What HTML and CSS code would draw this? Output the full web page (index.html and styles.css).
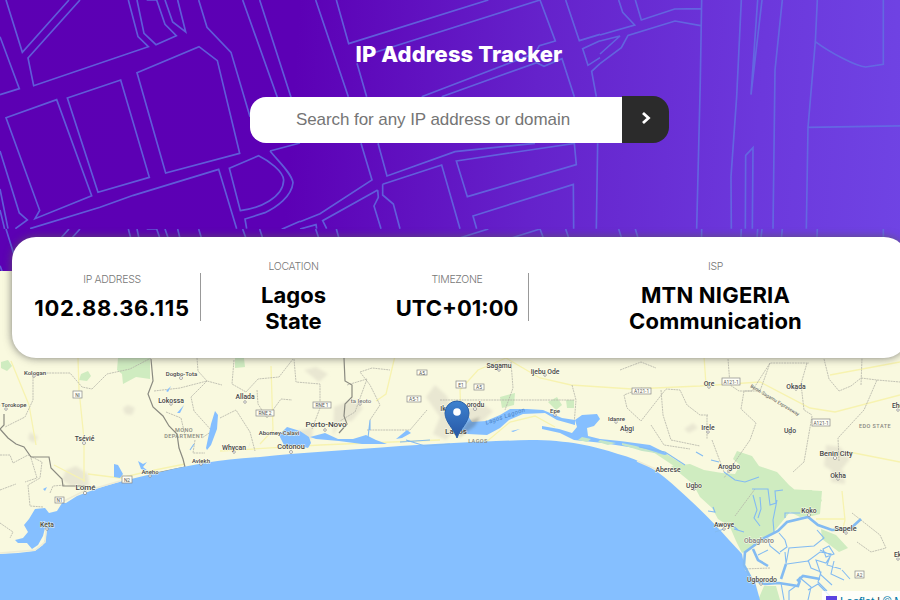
FILE: index.html
```
<!DOCTYPE html>
<html lang="en">
<head>
<meta charset="utf-8">
<title>IP Address Tracker</title>
<link rel="stylesheet" href="styles.css">
</head>
<body>
<div class="page">
<header class="hero">
  <svg class="streets" viewBox="0 0 918 271" aria-hidden="true">
    <defs>
      <clipPath id="tile"><rect width="918" height="229"/></clipPath>
      <g id="pattern" clip-path="url(#tile)">
        <g transform="scale(.33333)">
          <path d="M18 0 67 157 207 0M240 0 84 174 101 257 445 140 414 110 385 0M411 0 432 100 468 134 529 107 495 73 470 0M440 0H472M495 0 518 66 557 96 533 0M0 110 58 266 0 284M596 0 621 82 693 157 750 350M728 0 832 292M779 0 873 292"/>
          <path d="M18 353 170 299 275 587 105 656 119 631ZM202 294 362 240 448 532 294 577ZM411 218 597 140 652 182 719 460 497 519ZM90 686 300 622 400 586 656 508 710 686M688 505 776 467C805 481 850 515 851 540C850 592 780 625 721 632ZM810 453 900 429M810 453C836 485 875 520 879 548C875 590 829 622 795 638L735 657 740 686M0 453 58 639 82 660 46 686M0 567 24 686M0 630 20 712M845 688 900 664"/>
        </g>
        <g transform="translate(300) scale(.33333)">
          <path d="M47 0 145 290M109 0 146 131 565 0M720 0 210 162M720 0 766 123 718 137 705 160 365 290M425 290 710 188 732 199 786 176 823 290M171 190 200 290M797 0 838 122 900 103M900 122 848 146 864 196 900 173M900 191 875 214 889 290M183 430 216 540 60 641 0 665M234 430 261 528 465 455 705 430M248 553 425 495 480 686M248 553V585L280 612 300 686M233 570 68 662 80 686M233 570 235 592 222 618 243 686M469 483 823 430 829 494 502 590ZM530 686 519 648 820 553 821 686M893 430 889 686M0 687 48 674 50 686"/>
        </g>
        <g transform="translate(600) scale(.33333)">
          <path d="M56 0 68 37 104 75 0 105M106 0 124 60 224 27 305 26M0 123 60 108 0 162M0 191 64 143 84 106 225 63 302 77M305 0 301 240 290 686M424 0 410 290 393 530 394 686M473 0 453 284 486 0M547 0 525 210 519 686M652 0 646 125 624 382 619 686M646 125C690 158 770 200 797 201L850 193V0M624 382 954 377M436 686 437 466 459 443 457 686"/>
        </g>
      </g>
    </defs>
    <use href="#pattern"/>
    <use href="#pattern" y="229"/>
  </svg>
  <div class="intro">
    <h1>IP Address Tracker</h1>
    <form class="search">
      <input type="text" placeholder="Search for any IP address or domain" aria-label="IP address or domain">
      <button type="button" aria-label="Search"><svg width="11" height="14" viewBox="0 0 11 14"><path d="M2 2 7.500 7 2 12"/></svg></button>
    </form>
  </div>
</header>

<section class="card">
  <div class="item ruled"><h2>IP ADDRESS</h2><p class="ip">102.88.36.115</p></div>
  <div class="item"><h2>LOCATION</h2><p>Lagos<br>State</p></div>
  <div class="item ruled"><h2>TIMEZONE</h2><p class="zone">UTC+01:00</p></div>
  <div class="item"><h2>ISP</h2><p class="isp">MTN NIGERIA<br>Communication</p></div>
</section>

<main class="map">
<svg class="tiles" viewBox="0 271 918 329">
  <defs>
    <linearGradient id="pin" x2="0" y2="1"><stop stop-color="#3d82cf"/><stop offset="1" stop-color="#2857a5"/></linearGradient>
    <filter id="soft"><feGaussianBlur stdDeviation="1.500"/></filter>
  </defs>
  <rect class="land" y="271" width="918" height="329"/>

  <g class="green">
    <path d="M118 358h32v21l-14-2-13 7-1-10-5-4zM81 374l7-3 3 5-4 5-8-1zM1 362l7-2 4 6-5 5-6-3zM235 358h9l1 9-10 1z"/>
    <path d="M671 466 690 464 704 470 722 473 735 474 740 465 733 459 737 451 752 456 759 466 777 472 789 485 795 490 812 490 822 500 816 514 800 517 790 512 772 534 757 544 742 553 736 541 730 527 718 519 712 508 700 497 693 484zM640 445 660 450 684 465 680 470 656 454zM788 489 822 491 820 514 812 516 790 512zM821 529 836 535 848 548 839 552 822 539zM764 586 776 586 780 600 758 600zM500 397l15-4-1 12-12 3zM548 402l9-5 5 8-6 5zM566 400l8 0 0 8-7 0z"/>
  </g>
  <g class="urban" filter="url(#soft)">
    <path d="M66 470 76 466 88 474 89 486 71 486 62 480zM435 385 447 396 453 415 465 409 482 404 493 411 481 423 455 430 446 440 433 434 440 417 426 397zM826 445 840 447 850 459 838 474 824 466zM30 432l8 5-4 6-6-4zM123 408l5-3 7 3-3 7-7-1zM304 370l12-3 12 7-9 8zM334 407l20-8 9 9-11 13-12 1-7 14zM289 433l24-6-1 12-20 4zM684 429l9-6 5 5-9 5zM832 468l12 3 1 13-14-2z"/>
  </g>
  <g class="motor">
    <path d="M11 361 29 405 36 445M78 358 79 390 84 439 84 482M54 465 85 481M220 451 320 445 440 440M271 366 273 430 260 444M395 356 386 394 376 401M461 415 460 390 478 370 506 358M506 358 540 378 571 385 632 389 700 386 760 382 810 408 835 412 900 395M704 356 706 385M485 443 510 422 535 416 555 427M830 375 900 362M842 491 845 520 842 532M816 519 845 519M849 452 900 462M88 474 120 478 150 471 185 464"/>
  </g>
  <g class="minor">
    <path d="M25 373H70L82 387 92 389 107 374 130 369 151 358M33 374 33 400 25 417 5 427M0 455 10 455 13 463 28 455 42 462 40 478 28 485 30 506 43 507M31 458 37 478 25 482M0 490 16 484M0 523 13 532 10 538M50 493 53 486 65 485M154 391 180 388 207 381 191 397 194 411 212 431 202 438M166 412 181 418 186 439M195 440 193 453 205 453M197 358 198 371 207 381 222 385"/>
    <path d="M234 360 232 384 246 392 258 379 279 377 293 359M294 359 296 382 320 384 320 408 312 429M257 390 258 404 267 418 281 399 292 400M220 418 236 410 250 432 255 451M347 385 367 379 355 412 340 421M370 420 380 405 370 385 360 372 372 368 390 370M367 430H410L427 410M440 400H575M511 362 513 388 505 410M572 385 576 400 574 425M620 370 641 362 656 368M642 388 624 395 627 408 641 421 666 389 680 390 687 405 700 415 708 415M707 415V439M728 359 730 385 739 391 752 391 770 363H809M770 363 760 391 744 391 741 409 756 423 750 440 741 453 724 478M807 363 801 384 804 410 812 415M824 359 829 379 839 391 851 386 861 378 877 380 900 382M877 380 864 410 838 438 839 461M812 416 808 439 804 462 793 472M861 385 862 358M852 513 880 535 886 548 871 552 857 542M712 440 724 472M755 489 735 516M651 425 664 445 690 449M770 568 743 569M661 390 663 415 671 440 700 446"/>
  </g>
  <g class="border">
    <path d="M4 414V425L0 429 8 438 16 444 24 447 31 457H49L51 468 62 479 63 486H85V495M151 359 153 381 148 394 153 407 163 416 169 426 177 434 179 448 183 459 185 467 156 473M344 358 345 381 352 385 352 397 345 404 344 416 347 424 339 433"/>
  </g>

  <path class="water" d="M0 554 18 553 35 551 43 545 46 537 47 529 45 528 43 536 38 545 32 549 27 543 18 543 15 540 23 538 28 532 24 525 29 519 35 509 45 508 49 513 57 511 62 503 66 503 77 496 85 493C110 483 140 477 165 471C190 465 222 459 260 457C305 452 350 450 400 446C440 444 488 441 530 440C568 440 594 446 618 454C642 460 659 471 679 490C696 505 715 524 729 540L742 554 745 570 755 582 760 600H0z"/>
  <path class="water" d="M206 448 211 424 215 411 218 415 217 429 211 445 207 450zM166 391l5-5-3 6zM177 413l7-8-4 8zM114 477V464L118 465 123 474 120 478zM138 461 143 464 147 462 143 467 148 471 141 469zM43 489l4-2-2 4zM279 435 287 427 300 431 309 437 311 443 308 448 297 445 285 447zM310 437 325 433 338 439 353 439 366 435 376 440 387 444 362 444 339 441 316 439zM396 439 407 430 411 433 402 438zM249 446 251 439 248 449z"/>
  <path class="water" d="M458 421 466 413 472 422 486 421 500 415 510 409 527 409 543 410 562 418 575 420 575 425 557 420 545 413 523 414 509 420 500 428 487 435 468 434 460 432zM542 426 559 429 572 433 577 427 575 420 582 415 597 414 600 419 594 426 587 428 588 436 600 439 620 441 635 443 650 445 668 454 665 455 635 448 603 443 574 440 560 433 542 429zM511 431l9-2-7 3z"/>
  <path class="delta" d="M582 437l9 2-4 3-9-2zM600 440l16 3-8 2-10-3zM622 443l14 3 26 8-20-3-20-6z"/>
  <g class="river">
    <path d="M368 438 370 420 370 430M406 440 425 446 450 444M400 442 430 440M194 444 190 450M639 447 665 452 685 465M696 452 703 456M711 460 719 462M724 472 735 480 745 482 759 477M752 489 768 489 770 505 776 503 775 491 783 490M777 500 773 520 774 532M753 495 757 510 754 518 760 526M760 497 761 509 758 518M713 507 715 512 708 511M734 529 744 532M731 524 738 530M785 518V513H800M715 532 724 529M768 538 770 546 780 554M779 533 785 540 787 547 780 552M768 550 758 555"/>
    <path class="wide" d="M744 553 764 538 778 531 787 522 808 517 818 525 832 530 850 529 861 519M745 552 744 565 752 580 765 584 779 583 798 586 800 580M786 564 781 579M797 581 803 576 820 579M753 549 758 560 768 566"/>
    <path d="M786 564 789 548 814 546 824 538 817 530M787 564 808 561 820 552 831 554 827 565 841 569M781 583 784 600M796 586 789 591 789 600M799 577 811 587 808 600M820 550 831 555 826 563 816 560 821 575 832 585M808 560 811 568 821 572 818 582 827 591M834 561 831 574 844 580M842 570 850 579M808 590 818 584 830 596M785 552 786 563M823 549 829 546 834 554 826 557z"/>
  </g>
  <path class="sand" d="M46 530 45 542 35 550 0 553M62 502 82 492 120 481M637 461 660 471"/>

  <g class="dots">
    <circle cx="34" cy="376" r="1.300"/><circle cx="6" cy="409" r="1.300"/><circle cx="84" cy="443" r="1.500"/><circle cx="85" cy="493" r="1.600"/><circle cx="47" cy="529" r="1.300"/><circle cx="181" cy="378" r="1.500"/><circle cx="171" cy="404" r="1.300"/><circle cx="201" cy="464" r="1.400"/><circle cx="150" cy="476" r="1.300"/><circle cx="245" cy="402" r="1.300"/><circle cx="234" cy="452" r="1.300"/><circle cx="291" cy="452" r="1.500"/><circle cx="325" cy="430" r="1.300"/><circle cx="360" cy="404" r="1.300"/><circle cx="499" cy="370" r="1.300"/><circle cx="545" cy="375" r="1.300"/><circle cx="475" cy="409" r="1.500"/><circle cx="555" cy="415" r="1.300"/><circle cx="616" cy="422" r="1.300"/><circle cx="627" cy="431" r="1.300"/><circle cx="709" cy="387" r="1.300"/><circle cx="708" cy="432" r="1.300"/><circle cx="796" cy="389" r="1.300"/><circle cx="790" cy="433" r="1.300"/><circle cx="835" cy="458" r="1.600"/><circle cx="838" cy="479" r="1.300"/><circle cx="729" cy="471" r="1.300"/><circle cx="694" cy="489" r="1.300"/><circle cx="724" cy="529" r="1.300"/><circle cx="809" cy="515" r="1.500"/><circle cx="846" cy="533" r="1.300"/><circle cx="761" cy="584" r="1.300"/><circle cx="898" cy="410" r="1.300"/><circle cx="898" cy="559" r="1.300"/>
  </g>

  <g class="shield">
    <rect x="73" y="391" width="9" height="7"/><rect x="122" y="476" width="10" height="7"/><rect x="55" y="497" width="9" height="6"/><rect x="313" y="402" width="18" height="6"/><rect x="256" y="410" width="18" height="6"/><rect x="417" y="370" width="10" height="5"/><rect x="407" y="396" width="14" height="6"/><rect x="456" y="381" width="10" height="7"/><rect x="474" y="384" width="10" height="6"/><rect x="632" y="388" width="19" height="6"/><rect x="722" y="378" width="18" height="7"/><rect x="812" y="419" width="18" height="7"/><rect x="855" y="571" width="9" height="7"/>
    <text x="77.500" y="396.500">NI</text><text x="127" y="481.500">N2</text><text x="59.500" y="502">N1</text><text x="322" y="407">RNE 1</text><text x="265" y="415">RNE 2</text><text x="422" y="374.500">A5</text><text x="414" y="401">A5-1</text><text x="461" y="386.500">E1</text><text x="479" y="389">A5</text><text x="641.500" y="393">A121-1</text><text x="731" y="383.500">A121-1</text><text x="821" y="424.500">A121-1</text><text x="859.500" y="576.500">A2</text>
  </g>
  <g class="place">
    <text x="35" y="375" class="tiny">Kologan</text><text x="26.500" y="406.500" class="tiny end">e Torokope</text><text x="84.500" y="440.500">Tsévié</text><text x="85.500" y="490" class="city">Lomé</text><text x="47" y="526.500">Keta</text><text x="181.500" y="375.500" class="tiny">Dogbo-Tota</text><text x="171" y="402.500">Lokossa</text><text x="201" y="462.500" class="tiny">Avlekh</text><text x="150" y="474" class="tiny">Aneho</text>
    <text x="245" y="399">Allada</text><text x="279" y="435" class="tiny">Abomey-Calavi</text><text x="234" y="449.500">Whycan</text><text x="291" y="449" class="town">Cotonou</text><text x="326" y="426.500" class="city">Porto-Novo</text><text x="361" y="403" class="tiny light">ta Ieoto</text>
    <text x="499" y="368">Sagamu</text><text x="545" y="374">Ijebu Ode</text><text x="475.500" y="407">orodu</text><text x="443" y="411">Ik</text><text x="456" y="434" class="city">Lagos</text><text x="555" y="413" class="tiny">Epe</text><text x="616.500" y="420.500" class="tiny">Idanre</text><text x="627" y="430.500">Abgi</text>
    <text x="709" y="386">Ore</text><text x="708" y="430">Irele</text><text x="796" y="388.500">Okada</text><text x="790" y="432.500">Udo</text><text x="836" y="456" class="town">Benin City</text><text x="838" y="477.500">Okha</text><text x="729" y="469">Arogbo</text><text x="668" y="472">Aberese</text><text x="694" y="487.500">Ugbo</text><text x="724" y="526.500">Awoye</text><text x="809" y="513">Koko</text><text x="845.500" y="531" class="town">Sapele</text><text x="759" y="542.500" class="light">Obaghoro</text><text x="762" y="581.500">Ugborodo</text><text x="892" y="408" class="start">Eho</text><text x="894" y="557" class="start">Ek</text>
  </g>
  <g class="region"><text x="184" y="431.500">MONO</text><text x="184" y="437.500">DEPARTMENT</text><text x="875" y="428">EDO STATE</text><text x="478" y="443">LAGOS</text></g>
  <text class="lagoon" transform="translate(506 418) rotate(-19)">Lagos Lagoon</text>
  <text class="express" transform="translate(750 387) rotate(31)">Benin-Sagamu Expressway</text>

  <path class="shade" filter="url(#soft)" d="M458 438 467 422 480 417 475 426z"/>
  <path class="pin" d="M457 438C454 429 445 422 445 413A12 12 0 0 1 469 413C469 422 460 429 457 438z"/>
  <circle cx="457" cy="412" r="3.800" fill="#fff"/>
</svg>
<div class="credit"><i class="flag"></i><span>Leaflet</span> | <span>© MapTiler</span></div>
</main>
</div>
</body>
</html>
```
FILE: styles.css
```
* { box-sizing: border-box; }
body { margin: 0; height: 600px; overflow: hidden; font-family: Inter, "Open Sans", sans-serif; }
.page { width: 918px; height: 600px; display: flex; flex-direction: column; }
.hero {
  position: relative;
  flex: 0 0 271px;
  background: linear-gradient(94deg, #5c00b3 0%, #5c00b5 32%, #6522cb 58%, #6c38dc 82%, #7045e5 100%);
}
.streets { position: absolute; inset: 0; width: 918px; height: 271px; fill: none; stroke: #6172e2; stroke-width: 5; stroke-opacity: .8; }
.intro { position: relative; display: flex; flex-direction: column; align-items: center; padding-top: 40px; }
h1 { margin: 0; font-size: 22px; line-height: 28px; font-weight: 800; letter-spacing: .1px; color: #fff; white-space: nowrap; }
.search { display: flex; align-items: flex-end; margin-top: 28px; height: 47px; width: 419px; }
.search input {
  width: 372px; height: 46px; padding: 0 5px 0 0; border: 0; border-radius: 16px 0 0 16px;
  background: #fff; text-align: center; font: 17px "Liberation Sans", sans-serif; letter-spacing: -.07px;
}
.search input::placeholder { color: #757575; opacity: 1; }
.search button { width: 47px; height: 47px; padding: 0; border: 0; border-radius: 0 16px 16px 0; background: #2b2b2b; display: grid; place-items: center; }
.search button svg { fill: none; stroke: #fff; stroke-width: 2.800; margin-top: -3px; margin-left: 2px; }

.card {
  position: relative; z-index: 2;
  flex: 0 0 121px; width: 896px; margin: -34px 0 -87px 12px; padding: 0 6px 1px 12px;
  display: grid; grid-template-columns: 177px 185px 143px 373px; align-items: center;
  background: #fff; border-radius: 24px; box-shadow: 0 0 9px rgba(90, 90, 90, .8);
}
.item { display: flex; flex-direction: column; align-items: center; gap: 9px; text-align: center; }
.ruled { border-right: 1px solid #999; }
.item h2 { margin: 0; font-size: 10.500px; line-height: 13px; font-weight: 300; letter-spacing: -.3px; color: #777; }
.item p { margin: 0; font-size: 22px; line-height: 26px; font-weight: 700; letter-spacing: 0; color: #000; white-space: nowrap; }
.item .ip { letter-spacing: .72px; font-weight: 700; }
.item .isp { letter-spacing: .2px; }

.map { position: relative; flex: 0 0 329px; }
.tiles { display: block; width: 918px; height: 329px; }
.land { fill: #f9f9df; }
.green { fill: #cfecc0; }
.urban { fill: #e9e7d2; }
.water { fill: #85bfff; }
.delta { fill: #c4e6c8; }
.motor { fill: none; stroke: #f7f3b0; stroke-width: 1.300; }
.minor { fill: none; stroke: #b4b4a8; stroke-width: .8; stroke-dasharray: 2 .7; }
.border { fill: none; stroke: #8a8a80; stroke-width: 1.200; }
.river { fill: none; stroke: #83bbf2; stroke-width: 1.100; }
.river .wide { stroke-width: 2.600; }
.sand { fill: none; stroke: #eeecd5; stroke-width: 1.600; }
.dots { fill: #fff; stroke: #777; stroke-width: .6; }
.shield rect { fill: #fffff5; stroke: #888; stroke-width: .7; }
.shield text { font: 4.800px Roboto, sans-serif; text-anchor: middle; fill: #555; }
.place text { font: 500 6.800px Roboto, sans-serif; text-anchor: middle; fill: #444; stroke: #fffff0; stroke-width: .8; paint-order: stroke; }
.place .end { text-anchor: end; }
.place .start { text-anchor: start; }
.place .tiny { font-size: 6px; }
.place .town { font-size: 7.300px; }
.place .city { font-size: 8px; }
.place .light { fill: #777; }
.region { font: 500 5.500px Roboto, sans-serif; letter-spacing: .45px; text-anchor: middle; fill: #88887f; }
.lagoon { font: italic 6px Roboto, sans-serif; letter-spacing: .4px; text-anchor: middle; fill: #4a82c4; }
.express { font: 4.700px Roboto, sans-serif; fill: #555; }
.shade { fill: #333; opacity: .25; }
.pin { fill: url(#pin); stroke: #2c62a8; stroke-width: 1; }
.credit {
  position: absolute; left: 822px; top: 320px; width: 96px; height: 18px; padding: 3px 4px 0;
  display: flex; gap: 3px; overflow: hidden; white-space: nowrap;
  background: rgba(255, 255, 255, .8); font: 12px/17px "Liberation Sans", sans-serif; letter-spacing: -.3px; color: #333;
}
.credit span { color: #0078a8; }
.flag { flex: none; width: 11px; height: 8px; margin-top: 2px; background: #5b43e0; }
```
